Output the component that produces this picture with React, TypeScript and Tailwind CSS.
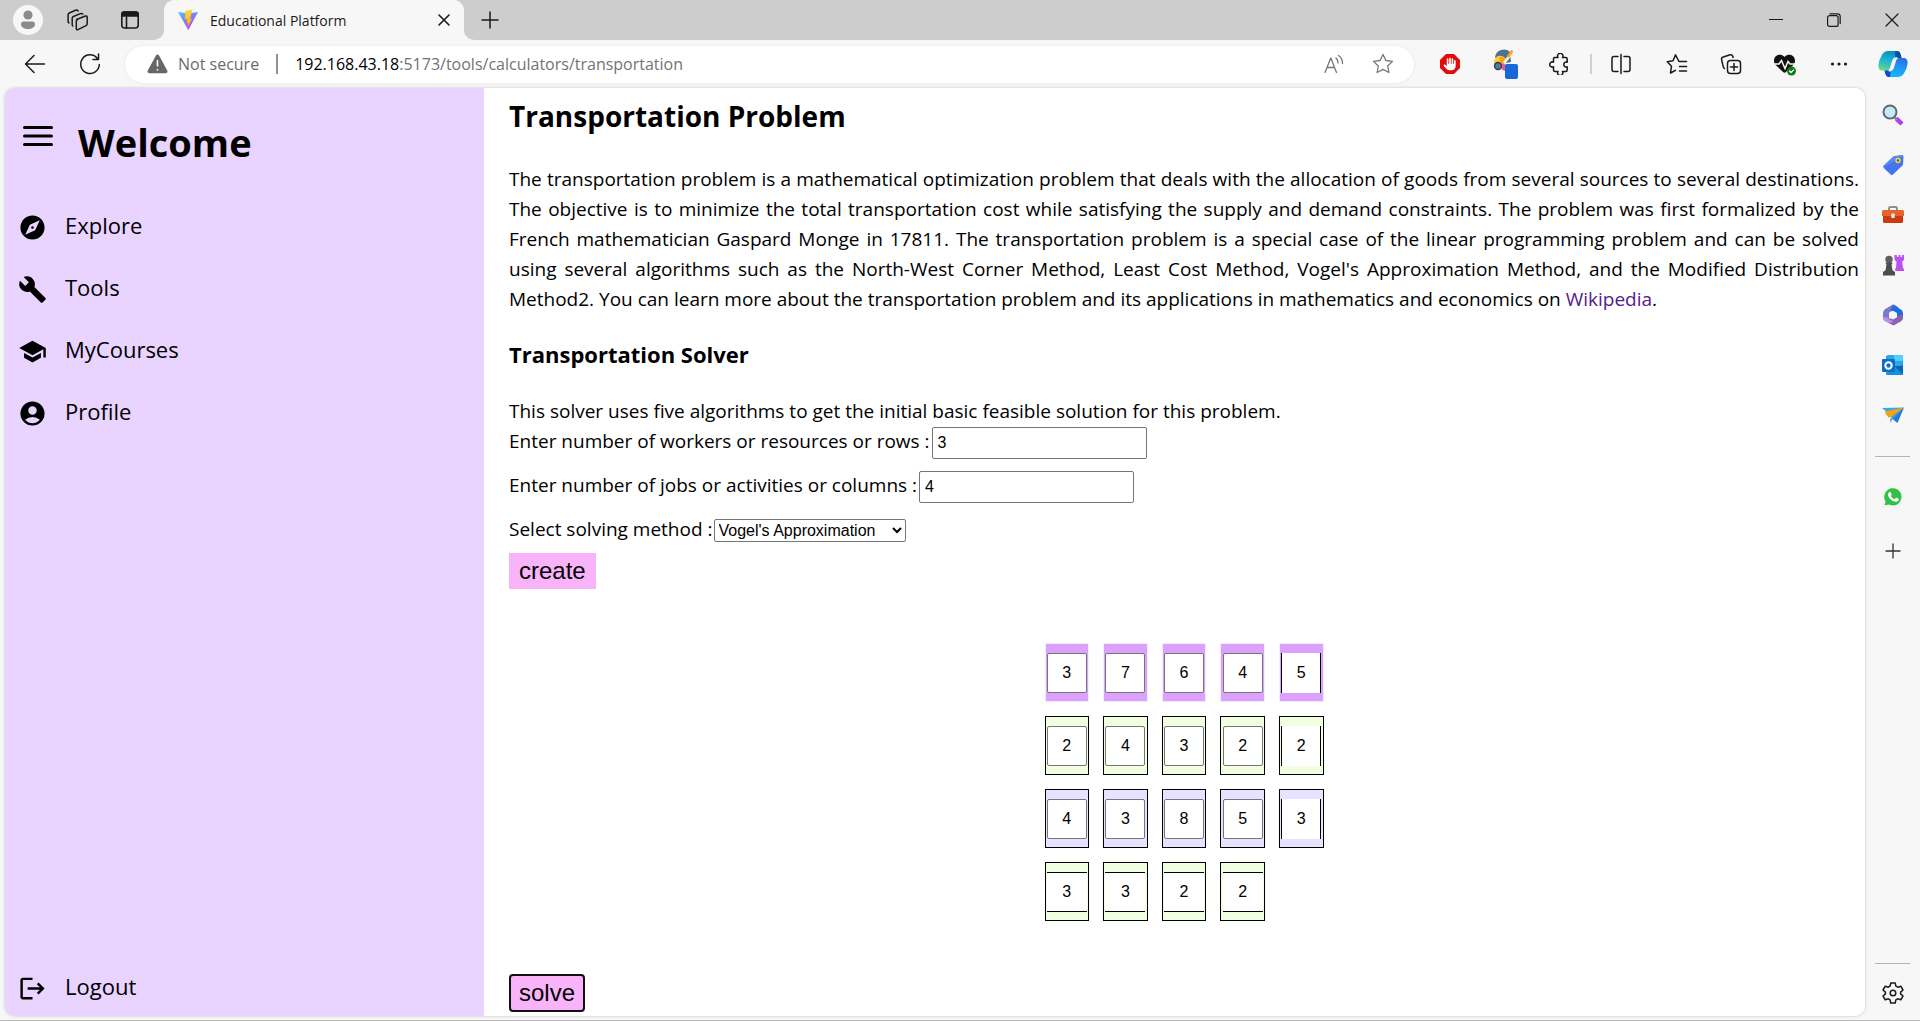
import { useState, type ReactNode } from "react";
import { MdExplore, MdBuild, MdSchool, MdAccountCircle, MdLogout } from "react-icons/md";
import { FaHand, FaHeart } from "react-icons/fa6";

const line = { fill: "none", stroke: "currentColor", strokeLinecap: "round", strokeLinejoin: "round" } as const;

function TabStrip() {
  return (
    <header className="flex h-10 shrink-0 items-center bg-[#cdcdcd] text-[#1a1a1a]">
      <button aria-label="Account" className="ml-[13px] flex size-[30px] items-center justify-center rounded-full bg-[#f7f7f7]">
        <svg width="16" height="20" viewBox="0 0 16 20" fill="#8c8c8c">
          <circle cx="8" cy="5" r="4.6" />
          <path d="M1 14a2.4 2.4 0 0 1 2.4-2.4h9.2A2.4 2.4 0 0 1 15 14c0 3.4-3 5-7 5s-7-1.600-7-5z" />
        </svg>
      </button>
      <button aria-label="Workspaces" className="ml-[23px]">
        <svg width="24" height="24" viewBox="0 0 24 24" {...line} strokeWidth="1.5">
          <path d="M10.500 11.500 19.500 8q1.700-.5 1.700 1.200v6.600q0 1.300-1.100 1.800L12 21.600q-1.700.6-1.700-1v-7.400q0-1.200 1.200-1.700z" />
          <path d="M6.800 18q-.6-.4-.6-1.400v-6.400q0-1.200 1.200-1.700l7-2.900q1.600-.6 2.400.6M3 15q-.9-.5-.9-1.700V6.700Q2.100 5.500 3.300 5l6.200-2.700q1.700-.6 2.600.7" />
        </svg>
      </button>
      <button aria-label="Tab actions" className="ml-[30px]">
        <svg width="20" height="20" viewBox="0 0 20 20" {...line} strokeWidth="1.6">
          <rect x="1.800" y="2" width="16.400" height="16" rx="3" />
          <path d="M2 3.500Q2 2 4 2h12q2 0 2 1.500V6H2z" fill="currentColor" />
          <path d="M6.500 7v11" />
        </svg>
      </button>
      <div className="ml-[14px] size-[10px] self-end overflow-hidden bg-[#f7f7f7]">
        <div className="size-[10px] rounded-br-[10px] bg-[#cdcdcd]" />
      </div>
      <div className="flex h-10 w-[300px] items-center rounded-t-[10px] bg-[#f7f7f7] pl-[13px] pr-[13px]">
        <svg width="22" height="22" viewBox="0 0 22 22" className="shrink-0">
          <defs>
            <linearGradient id="viteBody" x1="0" y1="0" x2=".6" y2="1"><stop stopColor="#41c8ff" /><stop offset="1" stopColor="#bd34fe" /></linearGradient>
            <linearGradient id="viteBolt" x1="0" y1="0" x2="0" y2="1"><stop stopColor="#ffd83d" /><stop offset="1" stopColor="#ffa800" /></linearGradient>
          </defs>
          <path d="M1 3 11 4.600 21 3 11.300 21z" fill="url(#viteBody)" />
          <path d="M15.500.5 8.300 2 7.800 10.600l2.500-.6-.8 4.200 1.700-.5-1 5.300 5-9.200-2.300.4z" fill="url(#viteBolt)" />
        </svg>
        <span className="ml-[11px] flex-1 text-[14px]">Educational Platform</span>
        <button aria-label="Close tab">
          <svg width="14" height="14" viewBox="0 0 14 14" {...line} strokeWidth="1.600"><path d="m2 2 10 10M12 2 2 12" /></svg>
        </button>
      </div>
      <div className="size-[10px] self-end overflow-hidden bg-[#f7f7f7]">
        <div className="size-[10px] rounded-bl-[10px] bg-[#cdcdcd]" />
      </div>
      <button aria-label="New tab" className="ml-[7px]">
        <svg width="18" height="18" viewBox="0 0 18 18" {...line} strokeWidth="1.500"><path d="M9 1v16M1 9h16" /></svg>
      </button>
      <div className="ml-auto flex">
        <button aria-label="Minimize" className="flex w-[58px] justify-center">
          <svg width="14" height="14" viewBox="0 0 14 14" stroke="currentColor"><path d="M0 6.500h14" /></svg>
        </button>
        <button aria-label="Restore" className="flex w-[58px] justify-center">
          <svg width="14" height="14" viewBox="0 0 14 14" {...line} strokeWidth="1.200"><rect x=".6" y="2.600" width="10.500" height="10.800" rx="2" /><path d="M3 .8h7.400q2.800 0 2.800 2.800v7" /></svg>
        </button>
        <button aria-label="Close window" className="flex w-[57px] justify-center">
          <svg width="14" height="14" viewBox="0 0 14 14" {...line} strokeWidth="1.200"><path d="m1 1 12 12M13 1 1 13" /></svg>
        </button>
      </div>
    </header>
  );
}

function ToolButton({ label, children }: { label: string; children: ReactNode }) {
  return <button aria-label={label} className="flex w-[54px] shrink-0 justify-center">{children}</button>;
}

function Toolbar() {
  return (
    <div className="flex h-12 shrink-0 items-center text-[#1a1a1a]">
      <button aria-label="Back" className="ml-6">
        <svg width="22" height="22" viewBox="0 0 22 22" {...line} strokeWidth="1.500"><path d="M20.500 11H1.500M10 2.500 1.500 11l8.500 8.500" /></svg>
      </button>
      <button aria-label="Reload" className="ml-[33px]">
        <svg width="22" height="22" viewBox="0 0 22 22" {...line} strokeWidth="1.500"><path d="M20.300 11.500A9.300 9.300 0 1 1 18.400 5.500M19.500 1v5.500H14" /></svg>
      </button>
      <form className="ml-6 flex h-[37px] min-w-0 flex-1 items-center rounded-full bg-white pl-[22px] shadow-[0_0_3px_#e2e2e2]">
        <svg width="21" height="20" viewBox="0 0 21 20" className="shrink-0">
          <path d="M8.800 1.800q1.700-2.800 3.400 0l8 14.700q1 2.500-1.700 2.700h-16q-2.700-.2-1.700-2.700z" fill="#666" />
          <path d="M10.500 6v6.500M10.500 15v1.600" stroke="#fff" strokeWidth="1.600" />
        </svg>
        <span className="ml-[10px] text-[16px] text-[#6b6b6b]">Not secure</span>
        <span className="mx-[17px] h-5 w-[2px] bg-[#919191]" />
        <span className="flex-1 text-[16px] text-[#737373]"><span className="text-black">192.168.43.18</span>:5173/tools/calculators/transportation</span>
        <button type="button" aria-label="Read aloud" className="text-[#767676]">
          <svg width="20" height="20" viewBox="0 0 20 20" {...line} strokeWidth="1.300"><path d="M1 18.500 6.800 4l5.700 14.500M3 13.500h7.600M12 4q2 1.800 2 5M14.500 1.500q4 2.500 4 8" /></svg>
        </button>
        <button type="button" aria-label="Add to favorites" className="ml-7 mr-5 text-[#767676]">
          <svg width="22" height="22" viewBox="0 0 22 22" {...line} strokeWidth="1.300"><path d="m11 1.500 2.900 6 6.600.9-4.800 4.600 1.200 6.500-5.900-3.100-5.900 3.100 1.200-6.500L1.500 8.400l6.600-.9z" /></svg>
        </button>
      </form>
      <div className="ml-[9px] flex items-center">
        <ToolButton label="Ad blocker">
          <svg width="20" height="20" viewBox="0 0 20 20">
            <path d="M6 0h8l6 6v8l-6 6H6l-6-6V6z" fill="#e60b0b" />
            <FaHand x="3.500" y="3.500" size={13} color="#fff" />
          </svg>
        </ToolButton>
        <button aria-label="Paint extension" className="flex w-[60px] shrink-0 justify-center">
          <svg width="28" height="30" viewBox="0 0 28 30">
            <path d="M2 8a9 9 0 0 1 15-5l1 10-10 2z" fill="#4c7490" />
            <path d="M1 12q3-8 10-4l3 3-7 5-6-1z" fill="#ffce2e" />
            <path d="M6 8q5-1 7 4l-5 4z" fill="#ff9e18" />
            <path d="m10 13 8-10 2 2-8 10z" fill="#f6f0de" />
            <path d="m14 7 4-6q2.500 0 2 2l-4 6z" fill="#ff9e37" />
            <path d="M9 15q5-2 5 7-5 0-6-3z" fill="#f65297" />
            <circle cx="5" cy="17" r="3.500" fill="#557a94" stroke="#253e50" strokeWidth="1.300" />
            <rect x="12" y="15" width="13" height="15" rx="2" fill="#1967d8" />
          </svg>
        </button>
        <button aria-label="Extensions" className="flex w-[45px] shrink-0 justify-center">
          <svg width="22" height="22" viewBox="0 0 22 22" {...line} strokeWidth="1.500"><path d="M5.500 4.500H9a2.700 2.700 0 1 1 4.500 0h3.200q1.500 0 1.500 1.500v3.200a2.500 2.500 0 1 0 0 4.600V17q0 1.500-1.500 1.500h-3.200a2.600 2.600 0 1 1-4.500 0H6Q4.500 18.500 4.500 17v-3.200a2.600 2.600 0 1 1 0-4.600V6q0-1.500 1-1.500z" /></svg>
        </button>
        <span className="mx-2 h-5 w-[2px] bg-[#cfcfcf]" />
        <button aria-label="Split screen" className="flex w-[42px] shrink-0 justify-center">
          <svg width="22" height="22" viewBox="0 0 22 22" {...line} strokeWidth="1.500"><path d="M11 1.500v19M8 3.500H4q-2 0-2 2v11q0 2 2 2h4M14 3.500h4q2 0 2 2v11q0 2-2 2h-4" /></svg>
        </button>
        <span className="w-2" />
        <ToolButton label="Favorites">
          <svg width="22" height="22" viewBox="0 0 22 22" {...line} strokeWidth="1.500"><path d="M20.500 8.500H13L9.500 1.800l-2.500 6-5.700 1 4.200 4.400-1 6.800 5-2.700M13.500 13.500h7M13.500 18h7" /></svg>
        </ToolButton>
        <ToolButton label="Collections">
          <svg width="22" height="22" viewBox="0 0 22 22" {...line} strokeWidth="1.500"><rect x="7.500" y="7.500" width="13" height="13" rx="3" /><path d="M14 10.500v7M10.500 14h7M4.500 15.500q-1-.5-1.200-1.700L1.600 6.500Q1.200 4.500 3.200 4l7-2.300q2-.4 2.600 1.600l.3 1.200" /></svg>
        </ToolButton>
        <ToolButton label="Browser essentials">
          <svg width="24" height="24" viewBox="0 0 24 24">
            <FaHeart x="1" y="1" size={21} color="#111" />
            <path d="M0 12h6l2.500-3.500 3.500 8 3-7 2 2.500h6" fill="none" stroke="#f7f7f7" strokeWidth="1.500" />
            <circle cx="18.500" cy="19" r="4.500" fill="#107c10" />
            <path d="m16.500 19 1.500 1.500 2.700-2.700" {...line} stroke="#fff" strokeWidth="1.200" />
          </svg>
        </ToolButton>
        <ToolButton label="Settings and more">
          <svg width="18" height="18" viewBox="0 0 18 18" fill="currentColor"><circle cx="2.500" cy="9" r="1.600" /><circle cx="9" cy="9" r="1.600" /><circle cx="15.500" cy="9" r="1.600" /></svg>
        </ToolButton>
        <button aria-label="Copilot" className="flex w-[54px] shrink-0 justify-center">
          <svg width="30" height="28" viewBox="0 0 30 28">
            <defs>
              <linearGradient id="copA" x1=".5" y1="0" x2=".2" y2="1"><stop stopColor="#0a8fc0" /><stop offset=".5" stopColor="#1fb5cf" /><stop offset="1" stopColor="#63dc8a" /></linearGradient>
              <linearGradient id="copB" x1=".7" y1="0" x2=".3" y2="1"><stop stopColor="#2b6fe0" /><stop offset=".5" stopColor="#209bf3" /><stop offset="1" stopColor="#16b9f8" /></linearGradient>
            </defs>
            <path d="M9.500 1H19q2.500 0 3.500 3l1 4h-5q-2.500 0-3.200 2.500L13 18q-.8 2.500-3 2.500H4.500Q0 20.500.4 15q.6-5.500 4-11Q6.500 1 9.500 1z" fill="url(#copA)" />
            <path d="M17 1h2q2.500 0 3.500 3l1 4h-6z" fill="#0b4f9e" />
            <path d="M20.500 27H11q-2.500 0-3.500-3l-1-3.500H10q2.500 0 3.200-2.500l2.100-7.500Q16 8 18.500 8h7q4.500 0 4.100 5.500-.6 5.500-4 10.500-2.100 3-5.100 3z" fill="url(#copB)" />
            <path d="M6.500 20.500H10q2.300 0 3.100-2.200L12 27h-1q-2.500 0-3.500-3z" fill="#1746c7" />
            <path d="M17.500 9.200q.6-1 2-1h-1q-2.500 0-3.200 2.300L13 18q-.6 2-2.200 2.400h1.400q2-.4 2.800-2.900z" fill="#f7f7f7" stroke="#f7f7f7" strokeWidth="2" />
          </svg>
        </button>
      </div>
    </div>
  );
}

const railIcons: { label: string; icon: ReactNode }[] = [
  {
    label: "Search",
    icon: <><path d="m13 14 3-1 5.500 5.500-3 3-5.500-5z" fill="#b23cf5" /><path d="m12 13 3 3" stroke="#8a8f94" strokeWidth="2.500" /><circle cx="8" cy="8" r="6.500" fill="#c5e8fb" stroke="#62676b" strokeWidth="2" /></>,
  },
  {
    label: "Shopping",
    icon: <><path d="M12.500 2 20 1q1.500 0 1.500 1.500L21 10q0 1-.8 1.800L11 20.500q-1.200 1-2.400 0L1.800 14q-1.200-1.200 0-2.400L11 2.700q.6-.6 1.500-.7z" fill="#4673ef" /><path d="m1.500 13 .3-1.400L11 2.700 20 1l1 1.500z" fill="#5b9cfb" opacity=".6" /><circle cx="16" cy="6.500" r="2" fill="#3c5fd0" stroke="#ffd42a" strokeWidth="1.500" /></>,
  },
  {
    label: "Tools",
    icon: <><path d="M7 7V4.500Q7 3 8.500 3h5Q15 3 15 4.500V7" fill="none" stroke="#8b9095" strokeWidth="2" /><rect x="1" y="6" width="20" height="13" rx="1.500" fill="#c93a12" /><path d="M0 7.500Q0 6 1.500 6h19Q22 6 22 7.500V12H0z" fill="#e9622a" /><rect x="9.200" y="9.500" width="3.600" height="4.500" rx=".8" fill="#dfe3e6" /></>,
  },
  {
    label: "Games",
    icon: <><path d="M12.500 1h2.300v2h1.700V1h2v2h1.500V1H22v5l-1.800 1.500.7 6.500 1.100 1v2h-8.500l-.5-2 1-1 .5-6.500-2-1.500z" fill="#bd51ef" /><circle cx="7" cy="5.500" r="3.700" fill="#606060" /><path d="M3.800 8.500h6.400v1.800H9.500l1 6 2.500 1.700v3.500H1V18l2.500-1.700 1-6h-.7z" fill="#4d4d4d" /></>,
  },
  {
    label: "Microsoft 365",
    icon: <><path d="M10.500.8 3.200 5Q1 6.500 1 9v5l6.500 3.500V8.300L17 3.500 12.500.8q-1-.5-2 0z" fill="#7a79d2" /><path d="m10.500.8 8 4.500Q21 6.500 21 9v6l-6.500-3V9.500l-5.800-3Z" fill="#1d6fdd" /><path d="M21 11v3q0 2-2 3.200L12.500 21q-1 .5-2 0L3 17q-2-1.300-2-3l6.500 1 7-3z" fill="#8d5fb5" /><path d="M1 14q1-2.500 6.500 1.500l4 2q-4 2.800-8.500-.5-2-1.300-2-3z" fill="#bd91e5" /><path d="m11 6.700 4 2.200v4.300l-4 2.300-4-2.300V8.900z" fill="#f7f7f7" /></>,
  },
  {
    label: "Outlook",
    icon: <><path d="M6 1h14q1 0 1 1v18q0 1-1 1H5q-1 0-1-1V2z" fill="#28a8ea" /><path d="M12 1h8q1 0 1 1v5h-9z" fill="#50d0fb" /><path d="M4 20 21 10v10q0 1-1 1H5z" fill="#1490df" /><path d="M12 12h9v8z" fill="#0a63b4" /><rect x="0" y="5" width="13" height="13" rx="1" fill="#0f6cc4" /><circle cx="6.500" cy="11.500" r="3.200" fill="none" stroke="#fff" strokeWidth="2" /></>,
  },
  {
    label: "Drop",
    icon: <><path d="M0 4 22 3.500 8 11z" fill="#38a9ee" /><path d="M22 3.500 15.500 19l-5-4L8 11z" fill="#2579dc" /><path d="M22 3.500 10.500 15 8.500 19 8 15z" fill="#39aef0" /><path d="M3 7.500 22 3.500 9.500 13l-3 .5-3-4z" fill="#f2a313" /></>,
  },
];

function BrowserRail() {
  return (
    <aside className="flex w-[55px] shrink-0 flex-col items-center pt-4 text-[#333]">
      {railIcons.map(({ label, icon }) => (
        <button key={label} aria-label={label} className="mb-7">
          <svg width="22" height="22" viewBox="0 0 22 22">{icon}</svg>
        </button>
      ))}
      <span className="mt-[2px] h-px w-[35px] bg-[#b5b5b5]" />
      <button aria-label="WhatsApp" className="mt-[29px]">
        <svg width="22" height="22" viewBox="0 0 22 22">
          <path d="M.8 21.400 2.200 16A10 10 0 1 1 6.300 20z" fill="#fff" stroke="#e3e3e3" strokeWidth=".5" />
          <path d="m2.500 19.500 1-4A8.700 8.700 0 1 1 6.700 18.500z" fill="#34bf49" />
          <path d="M7 6.200q1-.9 1.800.2l.9 1.900q.2.600-.9 1.700 1.200 2.300 3.700 3.300l1.200-1.400q.3-.3.8-.1l2 1q.5.300.3 1-.8 2.200-3.200 1.900-5.500-.9-7.500-6.200-.5-2 .9-3.300z" fill="#fff" />
        </svg>
      </button>
      <button aria-label="Customize" className="mt-[35px]">
        <svg width="16" height="16" viewBox="0 0 16 16" {...line} strokeWidth="1.300"><path d="M8 1v14M1 8h14" /></svg>
      </button>
      <span className="mt-auto h-px w-[35px] bg-[#b5b5b5]" />
      <button aria-label="Settings" className="mb-[15px] mt-[17px] text-[#1a1a1a]">
        <svg width="24" height="24" viewBox="0 0 24 24" {...line} strokeWidth="1.500">
          <path d="M9.800 2h4.400l.7 3.200 1.800 1 3.100-1 2.200 3.800-2.400 2.100v1.800l2.400 2.100-2.200 3.800-3.100-1-1.800 1-.7 3.200H9.800l-.7-3.200-1.800-1-3.100 1L2 15l2.400-2.100v-1.800L2 9l2.200-3.800 3.100 1 1.800-1z" />
          <circle cx="12" cy="12" r="2.800" />
        </svg>
      </button>
    </aside>
  );
}

const navItems = [
  { label: "Explore", Icon: MdExplore },
  { label: "Tools", Icon: MdBuild },
  { label: "MyCourses", Icon: MdSchool },
  { label: "Profile", Icon: MdAccountCircle },
];

function Sidebar() {
  return (
    <nav className="flex w-[479px] shrink-0 flex-col bg-[#e9d3ff] pb-2 text-black">
      <div className="flex h-[108px] items-center pl-[18px]">
        <button aria-label="Toggle menu">
          <svg width="30" height="20" viewBox="0 0 30 20" {...line} strokeWidth="3" className="mb-3"><path d="M1.500 1.500h27M1.500 10h27M1.500 18.500h27" /></svg>
        </button>
        <h1 className="ml-[25px] text-[38px] font-bold">Welcome</h1>
      </div>
      {navItems.map(({ label, Icon }) => (
        <a key={label} href="#" className="flex h-[62px] items-center pl-[13px] text-[22px]">
          <Icon size={29} />
          <span className="ml-[18px] pb-1">{label}</span>
        </a>
      ))}
      <a href="#" className="mt-auto flex h-10 items-center pl-[13px] text-[22px]">
        <MdLogout size={29} />
        <span className="ml-[18px] pb-1">Logout</span>
      </a>
    </nav>
  );
}

const rows = [
  { cells: ["3", "7", "6", "4", "5"], tone: "border-[#f3ecff] bg-[#dca0ff]" },
  { cells: ["2", "4", "3", "2", "2"], tone: "border-black bg-[#f0ffe0]" },
  { cells: ["4", "3", "8", "5", "3"], tone: "border-black bg-[#e5e3ff]" },
  { cells: ["3", "3", "2", "2"], tone: "border-black bg-[#f0ffe0]" },
];

function inputBorder(row: number, col: number) {
  if (col === 4) return "border-x border-black";
  if (row === 3) return "border-y border-black";
  return "border border-[#767676] rounded-[2px]";
}

function CostTable() {
  return (
    <table className="mx-auto w-[307px] table-fixed border-separate border-spacing-[14px]">
      <tbody>
        {rows.map((row, r) => (
          <tr key={r}>
            {Array.from({ length: 5 }, (_, c) =>
              c < row.cells.length ? (
                <td key={c} className={`h-[59px] border p-0 ${row.tone}`}>
                  <input
                    aria-label={`Row ${r + 1}, column ${c + 1}`}
                    defaultValue={row.cells[c]}
                    className={`mx-auto block size-10 bg-white text-center font-['Liberation_Sans',sans-serif] text-[16px] ${inputBorder(r, c)}`}
                  />
                </td>
              ) : (
                <td key={c} />
              ),
            )}
          </tr>
        ))}
      </tbody>
    </table>
  );
}

const field = "ml-[2px] mt-px h-8 w-[215px] rounded-[2px] border border-[#767676] bg-white px-[5px] font-['Liberation_Sans',sans-serif] text-[16px]";

function Solver() {
  const [method, setMethod] = useState("Vogel's Approximation");
  return (
    <main className="flex min-w-0 flex-1 flex-col bg-white pl-[25px] pr-[6px] text-[19px] leading-[30px] text-black">
      <h2 className="mt-2 text-[28px] font-bold leading-10">Transportation Problem</h2>
      <p className="mt-7 text-justify">
        The transportation problem is a mathematical optimization problem that deals with the allocation of goods from
        several sources to several destinations. The objective is to minimize the total transportation cost while
        satisfying the supply and demand constraints. The problem was first formalized by the French mathematician
        Gaspard Monge in 17811. The transportation problem is a special case of the linear programming problem and can
        be solved using several algorithms such as the North-West Corner Method, Least Cost Method, Vogel's
        Approximation Method, and the Modified Distribution Method2. You can learn more about the transportation
        problem and its applications in mathematics and economics on{" "}
        <a href="#" className="text-[#551a8b]">Wikipedia</a>.
      </p>
      <h3 className="mt-[25px] text-[22px] font-bold">Transportation Solver</h3>
      <p className="mt-[27px]">This solver uses five algorithms to get the initial basic feasible solution for this problem.</p>
      <div className="flex h-11 items-start">
        <label htmlFor="rows">Enter number of workers or resources or rows :</label>
        <input id="rows" defaultValue="3" className={field} />
      </div>
      <div className="flex h-11 items-start">
        <label htmlFor="columns">Enter number of jobs or activities or columns :</label>
        <input id="columns" defaultValue="4" className={field} />
      </div>
      <div className="flex h-[39px] items-start">
        <label htmlFor="method">Select solving method :</label>
        <select
          id="method"
          value={method}
          onChange={(e) => setMethod(e.target.value)}
          className="ml-px mt-[5px] h-[23px] w-[192px] rounded-[2px] border border-[#767676] bg-white font-['Liberation_Sans',sans-serif] text-[16px] leading-5"
        >
          <option>Vogel's Approximation</option>
          <option>North-West Corner</option>
          <option>Least Cost</option>
        </select>
      </div>
      <button className="h-9 self-start bg-[#f9b4f9] px-[10px] font-['Liberation_Sans',sans-serif] text-[24px]">create</button>
      <div className="mt-10"><CostTable /></div>
      <button className="mb-1 mt-auto h-[38px] self-start rounded-[4px] border-2 border-[#101010] bg-[#f9b4f9] px-2 font-['Liberation_Sans',sans-serif] text-[24px]">solve</button>
    </main>
  );
}

export default function App() {
  return (
    <div className="flex h-screen flex-col overflow-hidden border-b border-[#b9b9b9] bg-[#f7f7f7] font-['Open_Sans','Noto_Sans',sans-serif]">
      <TabStrip />
      <Toolbar />
      <div className="flex min-h-0 flex-1">
        <div className="mb-1 ml-[5px] flex min-w-0 flex-1 overflow-hidden rounded-[10px] shadow-[0_0_3px_#bdbdbd]">
          <Sidebar />
          <Solver />
        </div>
        <BrowserRail />
      </div>
    </div>
  );
}
